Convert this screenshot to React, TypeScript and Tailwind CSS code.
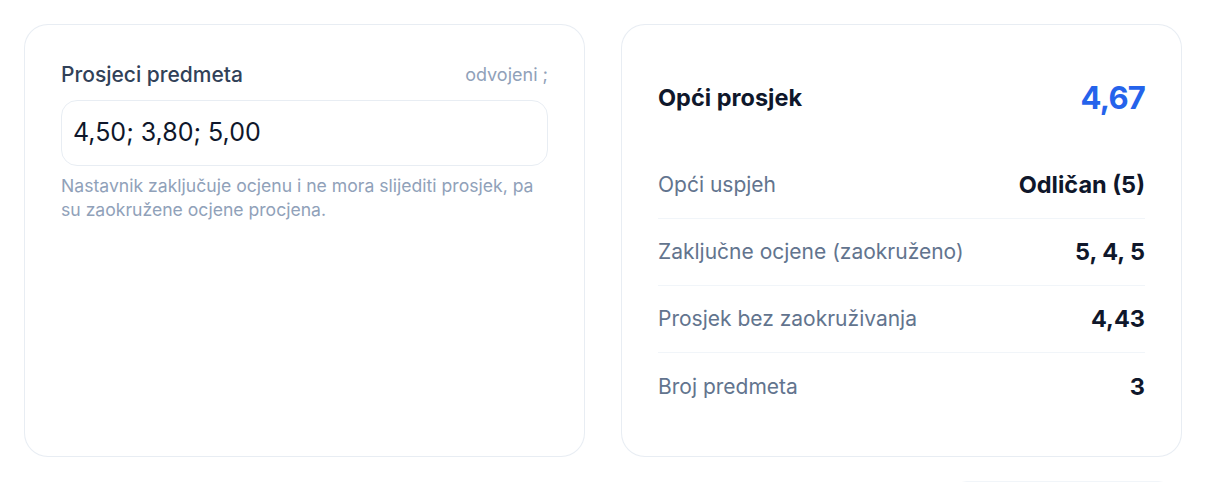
import React from "react";

export default function App() {
  const rows: [string, string][] = [
    ["Opći uspjeh", "Odličan (5)"],
    ["Zaključne ocjene (zaokruženo)", "5, 4, 5"],
    ["Prosjek bez zaokruživanja", "4,43"],
    ["Broj predmeta", "3"],
  ];
  return (
    <div
      className="min-h-[482px] bg-white px-6 pt-6"
      style={{ fontFamily: "Inter, 'Noto Sans', sans-serif" }}
    >
      <div className="grid grid-cols-2 gap-9">
        <div className="rounded-3xl border border-slate-200/80 bg-white p-9">
          <div className="mb-[11px] flex items-center justify-between">
            <span className="text-[21px] leading-7 font-medium text-slate-700">Prosjeci predmeta</span>
            <span className="text-[18px] leading-7 text-slate-400">odvojeni ;</span>
          </div>
          <div className="flex h-[66px] items-center rounded-2xl border border-slate-200/80 px-[11px]">
            <span className="text-[25px] text-slate-900">4,50; 3,80; 5,00</span>
          </div>
          <p className="mt-2 text-[17.6px] leading-6 text-slate-400">
            Nastavnik zaključuje ocjenu i ne mora slijediti prosjek, pa su zaokružene ocjene procjena.
          </p>
        </div>
        <div className="rounded-3xl border border-slate-200/80 bg-white p-9">
          <div className="flex items-center justify-between pt-[19px] pb-[36px]">
            <span className="text-[23.5px] leading-9 font-bold text-slate-900">Opći prosjek</span>
            <span className="text-[31px] leading-9 font-bold tracking-tight text-[#2563eb]">4,67</span>
          </div>
          {rows.map(([k, v], i) => (
            <div
              key={k}
              className={
                "flex h-[67px] items-center justify-between " +
                (i < rows.length - 1 ? "border-b border-slate-100" : "")
              }
            >
              <span className="text-[21px] text-slate-500">{k}</span>
              <span className="text-[23.5px] font-bold text-slate-900">{v}</span>
            </div>
          ))}
        </div>
      </div>
      <div className="mt-[24px] flex justify-end pr-3">
        <div className="h-10 w-[215px] rounded-xl border border-slate-100" />
      </div>
    </div>
  );
}
